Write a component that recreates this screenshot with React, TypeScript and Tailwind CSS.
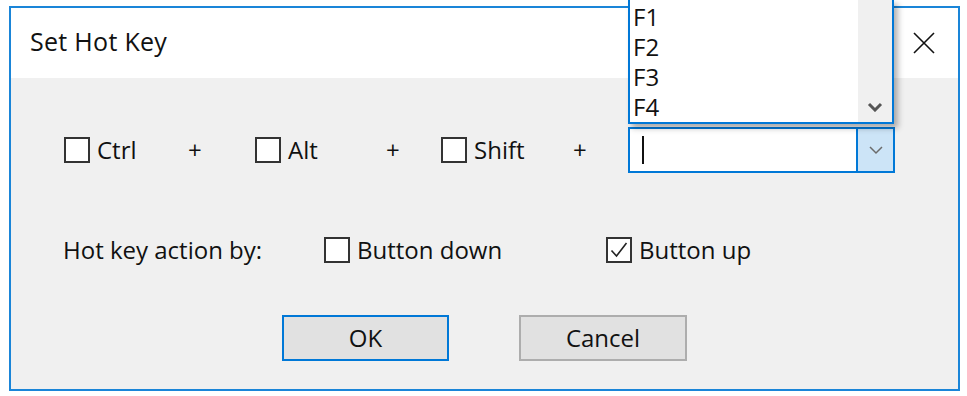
import React from 'react';

const FONT = { fontFamily: '"Open Sans", "Noto Sans", sans-serif' };

function Box({ checked = false }: { checked?: boolean }) {
  return (
    <span className="w-[26px] h-[26px] border-2 border-[#333333] bg-white flex items-center justify-center shrink-0">
      {checked && (
        <svg width="20" height="20" viewBox="0 0 20 20" fill="none">
          <path d="M2.5 10.5 L7.5 16 L17.5 3" stroke="#222" strokeWidth="1.6" />
        </svg>
      )}
    </span>
  );
}

function Check({ label, checked, width }: { label: string; checked?: boolean; width: string }) {
  return (
    <label className={`flex items-center gap-[7px] ${width}`}>
      <Box checked={checked} />
      <span className="leading-none">{label}</span>
    </label>
  );
}

function Chevron({ bold = false }: { bold?: boolean }) {
  return (
    <svg width="16" height="10" viewBox="0 0 16 10" fill="none">
      <path
        d="M2 2 L8 8 L14 2"
        stroke={bold ? '#555' : '#6b6b6b'}
        strokeWidth={bold ? 3 : 1.5}
      />
    </svg>
  );
}

export default function App() {
  return (
    <div className="w-[967px] h-[396px] bg-white pt-[6px] pl-[9px] text-[24px] text-[#111]" style={FONT}>
      <div className="relative w-[951px] h-[385px] border-2 border-[#1a85d8] bg-[#f0f0f0] flex flex-col">
        {/* title bar */}
        <div className="h-[70px] bg-white flex items-center justify-between pl-[19px] pr-[22px] shrink-0">
          <span className="text-[25px] -mt-[2px] tracking-[0.3px]">Set Hot Key</span>
          <svg width="24" height="24" viewBox="0 0 24 24" fill="none">
            <path d="M2 2 L22 22 M22 2 L2 22" stroke="#111" strokeWidth="1.6" />
          </svg>
        </div>

        {/* modifier row */}
        <div className="mt-[49px] h-[46px] flex items-center pl-[53px]">
          <Check label="Ctrl" width="w-[124px]" />
          <span className="w-[67px]">+</span>
          <Check label="Alt" width="w-[131px]" />
          <span className="w-[55px]">+</span>
          <Check label="Shift" width="w-[132px]" />
          <span className="w-[55px]">+</span>
          <div className="w-[267px] h-[46px] border-2 border-[#0078d7] bg-white flex">
            <div className="flex-1 flex items-center pl-[12px]">
              <span className="w-[2px] h-[28px] bg-[#111]" />
            </div>
            <div className="w-[37px] bg-[#cce4f7] border-l-2 border-[#0078d7] flex items-center justify-center">
              <Chevron />
            </div>
          </div>
        </div>

        {/* action row */}
        <div className="mt-[64px] h-[26px] flex items-center pl-[52px]">
          <span className="w-[261px] leading-none">Hot key action by:</span>
          <Check label="Button down" width="w-[282px]" />
          <Check label="Button up" checked width="w-[160px]" />
        </div>

        {/* buttons */}
        <div className="mt-[52px] flex pl-[271px] gap-[70px]">
          <button className="w-[167px] h-[46px] bg-[#e1e1e1] border-2 border-[#0078d7] text-[24px]">OK</button>
          <button className="w-[168px] h-[46px] bg-[#e1e1e1] border-2 border-[#adadad] text-[24px]">Cancel</button>
        </div>

        {/* open dropdown list */}
        <div className="absolute left-[617px] -top-[8px] w-[266px] h-[124px] bg-white border-x-2 border-b-2 border-[#0078d7] flex shadow-[4px_4px_6px_rgba(0,0,0,0.3)]">
          <div className="flex-1 flex flex-col pl-[3px] pt-[2px]">
            {['F1', 'F2', 'F3', 'F4'].map((f) => (
              <div key={f} className="h-[30px] leading-[30px]">{f}</div>
            ))}
          </div>
          <div className="w-[34px] bg-[#f0f0f0] flex items-end justify-center pb-[10px]">
            <Chevron bold />
          </div>
        </div>
      </div>
    </div>
  );
}
